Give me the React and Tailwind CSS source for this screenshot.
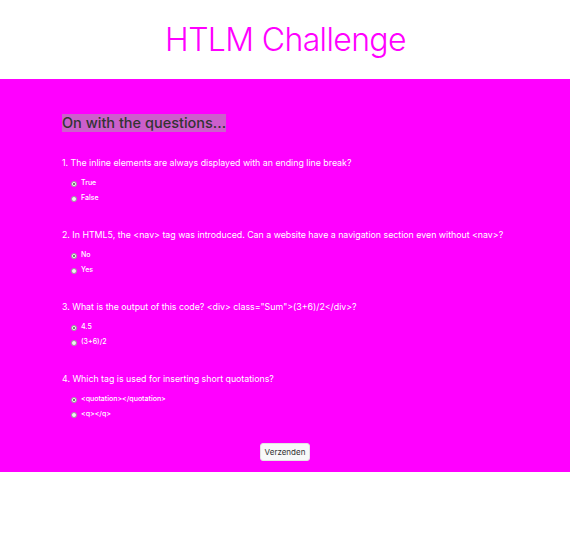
import React from 'react';

const questions = [
  {
    q: '1. The inline elements are always displayed with an ending line break?',
    options: ['True', 'False'],
  },
  {
    q: '2. In HTML5, the <nav> tag was introduced. Can a website have a navigation section even without <nav>?',
    options: ['No', 'Yes'],
  },
  {
    q: '3. What is the output of this code? <div> class="Sum">(3+6)/2</div>?',
    options: ['4.5', '(3+6)/2'],
  },
  {
    q: '4. Which tag is used for inserting short quotations?',
    options: ['<quotation></quotation>', '<q></q>'],
  },
];

function Radio({ checked }) {
  return (
    <span className="relative flex h-[6px] w-[6px] items-center justify-center rounded-full border border-[#9a9a9a] bg-[#f2f2f2]">
      {checked && <span className="h-[2px] w-[2px] rounded-full bg-[#555]" />}
    </span>
  );
}

function Question({ item }) {
  return (
    <div className="h-[72px]">
      <p className="text-[8.8px] leading-[12px] text-white">{item.q}</p>
      <div className="mt-[9px] flex flex-col gap-[4px] pl-[9px]">
        {item.options.map((opt, i) => (
          <label key={opt} className="flex h-[11px] items-center gap-[4px] text-[7px] font-medium text-white">
            <Radio checked={i === 0} />
            <span>{opt}</span>
          </label>
        ))}
      </div>
    </div>
  );
}

export default function App() {
  return (
    <div className="min-h-[535px] w-[571px] bg-white font-['Inter',sans-serif]">
      <header className="flex h-[79px] items-center justify-center">
        <h1 className="text-[32px] font-light leading-none tracking-[-0.02em] text-[#ff00ff]">HTLM Challenge</h1>
      </header>
      <main className="h-[393px] w-[570px] bg-[#ff00ff] pl-[62px] pt-[31px]">
        <h2 className="inline-block bg-[#cc5fcc] text-[14.5px] font-medium leading-[18px] text-[#333]">On with the questions...</h2>
        <div className="mt-[23px]">
          {questions.map((item) => (
            <Question key={item.q} item={item} />
          ))}
        </div>
        <div className="-mt-[2px] flex justify-center pr-[62px]">
          <button className="h-[18px] w-[50px] rounded-[3px] border border-[#e3e3e3] bg-[#f8f9fa] text-[8px] text-[#333]">
            Verzenden
          </button>
        </div>
      </main>
    </div>
  );
}
